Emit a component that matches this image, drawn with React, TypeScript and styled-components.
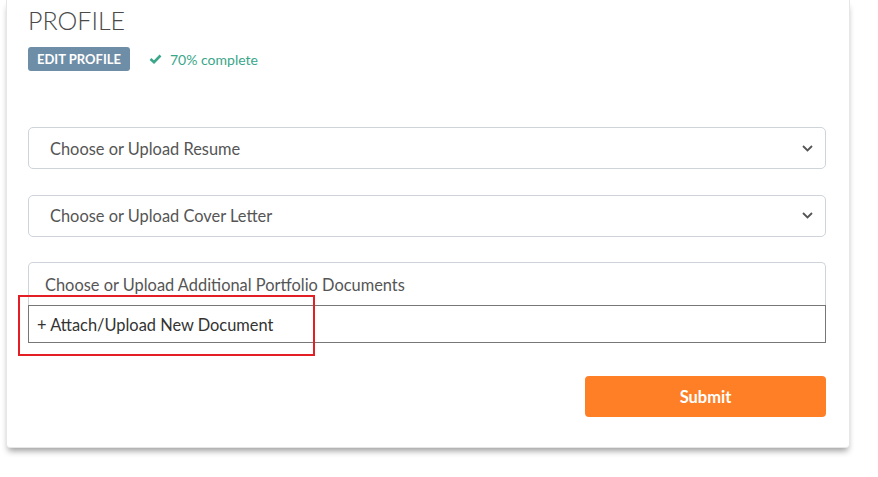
import styled, { createGlobalStyle } from "styled-components";

const GlobalStyle = createGlobalStyle`
  *, *::before, *::after {
    box-sizing: border-box;
  }
  html, body {
    margin: 0;
    padding: 0;
    background: #ffffff;
  }
  body {
    font-family: "Lato", "Liberation Sans", sans-serif;
    color: #555;
  }
`;

const Page = styled.div`
  width: 878px;
  height: 477px;
  padding: 0 28px 0 6px;
  overflow: hidden;
`;

const Card = styled.div`
  background: #fff;
  border: 1px solid #e6e6e6;
  border-top: none;
  border-radius: 0 0 4px 4px;
  box-shadow: 0 5px 6px -2px rgba(0, 0, 0, 0.38);
  padding: 4px 23px 30px 21px;
  display: flex;
  flex-direction: column;
`;

const Title = styled.h1`
  margin: 0;
  font-size: 25px;
  font-weight: 300;
  line-height: 32px;
  color: #4a4a4a;
`;

const StatusRow = styled.div`
  display: flex;
  align-items: center;
  gap: 19px;
  margin-top: 11px;
`;

const Badge = styled.span`
  display: inline-flex;
  align-items: center;
  height: 24px;
  padding: 0 9px;
  background: #6e8ea7;
  color: #fff;
  border-radius: 3px;
  font-size: 13px;
  font-weight: 700;
  text-transform: uppercase;
`;

const Complete = styled.span`
  display: inline-flex;
  align-items: center;
  gap: 8px;
  color: #3aa68a;
  font-size: 14px;
`;

const Fields = styled.div`
  display: flex;
  flex-direction: column;
  gap: 25.5px;
  margin-top: 56px;
`;

const SelectBox = styled.div`
  height: 42px;
  border: 1px solid #ced4da;
  border-radius: 5px;
  display: flex;
  align-items: center;
  justify-content: space-between;
  padding: 0 12px 0 21px;
  font-size: 16.4px;
  color: #555;
`;

const Group = styled.div`
  position: relative;
  display: flex;
  flex-direction: column;
`;

const MultiBox = styled.div`
  height: 43px;
  border: 1px solid #ced4da;
  border-bottom: none;
  border-radius: 5px 5px 0 0;
  display: flex;
  align-items: center;
  padding: 0 16px;
  font-size: 16.4px;
  color: #555;
`;

const AttachBox = styled.div`
  height: 38px;
  border: 1px solid #777;
  display: flex;
  align-items: center;
  padding: 0 8px;
  font-size: 16.4px;
  color: #333;
`;

const Highlight = styled.div`
  position: absolute;
  left: -10px;
  top: 33px;
  width: 297px;
  height: 61px;
  border: 2px solid #e31e24;
  pointer-events: none;
`;

const Actions = styled.div`
  display: flex;
  justify-content: flex-end;
  margin-top: 33px;
`;

const SubmitButton = styled.button`
  width: 241px;
  height: 41px;
  border: 0;
  border-radius: 4px;
  background: #ff7f27;
  color: #fff;
  font-family: inherit;
  font-size: 16.5px;
  font-weight: 700;
  cursor: pointer;
`;

function Chevron() {
  return (
    <svg width="11" height="7" viewBox="0 0 11 7">
      <polyline
        points="1,1 5.5,5.5 10,1"
        fill="none"
        stroke="#555"
        strokeWidth="1.8"
      />
    </svg>
  );
}

function Check() {
  return (
    <svg width="13" height="10" viewBox="0 0 13 10">
      <polyline
        points="1.5,5 5,8.2 11.5,1.5"
        fill="none"
        stroke="#3aa68a"
        strokeWidth="2.6"
      />
    </svg>
  );
}

export default function App() {
  return (
    <Page>
      <GlobalStyle />
      <Card>
        <Title>PROFILE</Title>
        <StatusRow>
          <Badge>Edit Profile</Badge>
          <Complete>
            <Check />
            70% complete
          </Complete>
        </StatusRow>
        <Fields>
          <SelectBox>
            Choose or Upload Resume
            <Chevron />
          </SelectBox>
          <SelectBox>
            Choose or Upload Cover Letter
            <Chevron />
          </SelectBox>
          <Group>
            <MultiBox>Choose or Upload Additional Portfolio Documents</MultiBox>
            <AttachBox>+ Attach/Upload New Document</AttachBox>
            <Highlight />
          </Group>
        </Fields>
        <Actions>
          <SubmitButton>Submit</SubmitButton>
        </Actions>
      </Card>
    </Page>
  );
}
